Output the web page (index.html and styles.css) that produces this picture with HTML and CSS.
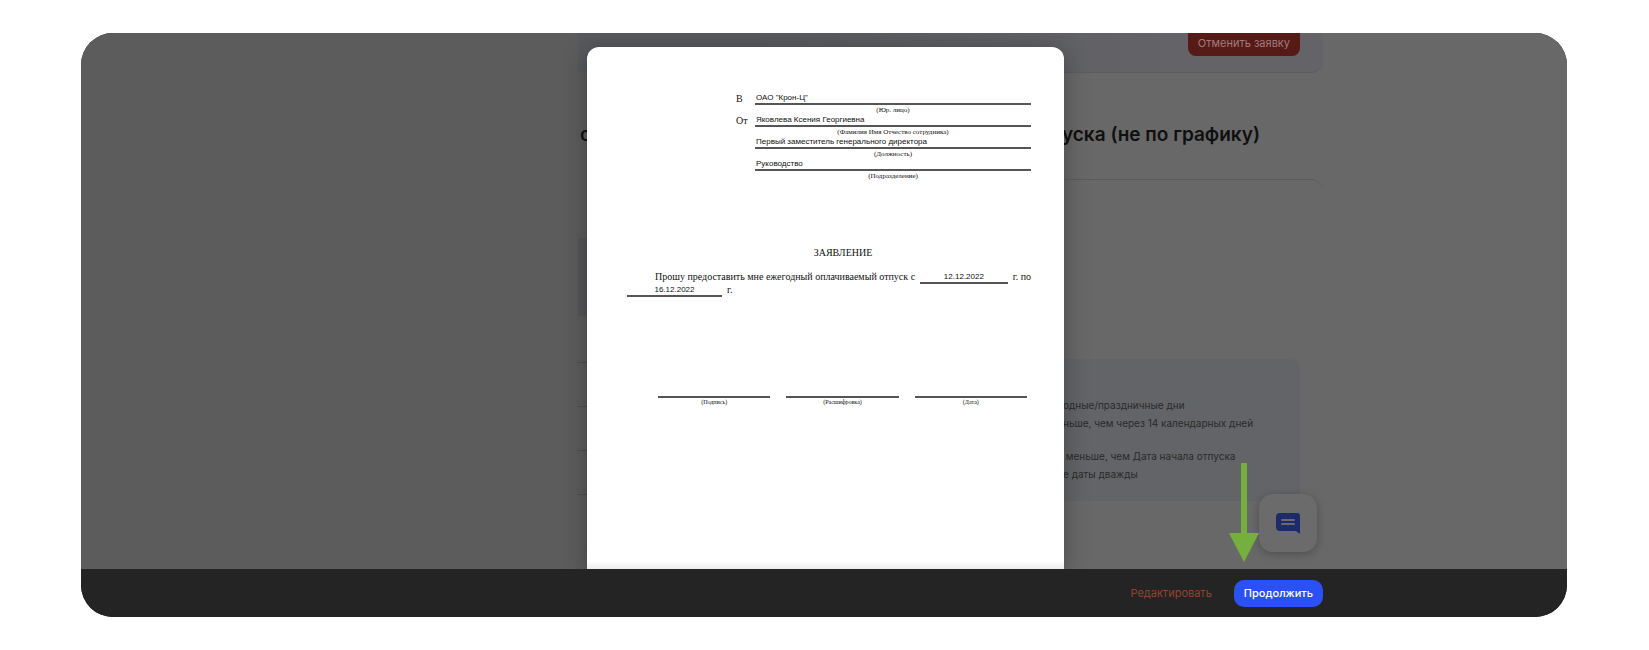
FILE: index.html
```html
<!DOCTYPE html>
<html lang="ru">
<head>
<meta charset="utf-8">
<title>Заявление на отпуск</title>
<link rel="stylesheet" href="styles.css">
</head>
<body>
<main class="frame">
  <div class="stage">
    <section class="page">
      <header class="page-top"><button class="cancel" type="button">Отменить заявку</button></header>
      <h1 class="title"><span>с</span><span>уска (не по графику)</span></h1>
      <div class="card">
        <div class="fields">
          <div class="picked"></div>
          <div class="row"></div>
          <div class="row"></div>
          <div class="row"></div>
          <div class="row"></div>
        </div>
        <div class="info">
          <p>одные/праздничные дни</p>
          <p>ньше, чем через 14 календарных дней</p>
          <p class="next">&nbsp;меньше, чем Дата начала отпуска</p>
          <p>е даты дважды</p>
        </div>
      </div>
      <button class="chat" type="button" aria-label="Чат">
        <svg width="24" height="22" viewBox="0 0 24 22"><path fill="#1f2a6a" d="M4 1h17a3 3 0 0 1 3 3v18l-4-3H4a4 4 0 0 1-4-4V5a4 4 0 0 1 4-4z"/><path d="M6 8h12M6 12h12" stroke="#6b6b6b" stroke-width="2" stroke-linecap="round"/></svg>
      </button>
      <svg class="arrow" width="30" height="99" viewBox="0 0 30 99"><path fill="#75b03f" d="M12 0h6v70h12L15 99 0 70h12z"/></svg>
    </section>

    <div class="overlay">
      <article class="paper" role="dialog" aria-label="Заявление">
        <dl class="addressee">
          <dt>В</dt>
          <dd><p class="value">ОАО "Крон-Ц"</p><p class="caption">(Юр. лицо)</p></dd>
          <dt>От</dt>
          <dd><p class="value">Яковлева Ксения Георгиевна</p><p class="caption">(Фамилия Имя Отчество сотрудника)</p></dd>
          <dd><p class="value">Первый заместитель генерального директора</p><p class="caption">(Должность)</p></dd>
          <dd><p class="value">Руководство</p><p class="caption">(Подразделение)</p></dd>
        </dl>
        <h2 class="doc-title">ЗАЯВЛЕНИЕ</h2>
        <div class="request">
          <div class="line first"><span>Прошу предоставить мне ежегодный оплачиваемый отпуск с</span><span class="date">12.12.2022</span><span>г. по</span></div>
          <div class="line"><span class="date">16.12.2022</span><span>г.</span></div>
        </div>
        <div class="signs">
          <p>(Подпись)</p>
          <p>(Расшифровка)</p>
          <p>(Дата)</p>
        </div>
      </article>
    </div>
  </div>
  <footer class="bar">
    <div class="actions">
      <button class="edit" type="button">Редактировать</button>
      <button class="go" type="button">Продолжить</button>
    </div>
  </footer>
</main>
</body>
</html>
```
FILE: styles.css
```css
* { box-sizing: border-box; }
body, h1, h2, p, dl, dt, dd { margin: 0; }
body {
  min-height: 100vh;
  display: flex;
  padding: 33px 82px 33px 81px;
  background: #fff;
  font-family: Inter, "Noto Sans", sans-serif;
}
button { border: 0; padding: 0; font: inherit; cursor: pointer; }

.frame {
  flex: 1;
  display: flex;
  flex-direction: column;
  border-radius: 32px;
  overflow: hidden;
  background: #232323;
}
.stage, .bar {
  display: grid;
  grid-template-columns: 497fr minmax(0, 745px) 244fr;
}
.stage {
  flex: 1;
  position: relative;
  overflow: hidden;
  background: linear-gradient(90deg, #5c5c5c 45%, #686868 60%);
}

.page {
  grid-column: 2;
  position: relative;
  display: flex;
  flex-direction: column;
}
.page-top {
  display: flex;
  justify-content: flex-end;
  align-items: flex-start;
  height: 40px;
  padding-right: 23px;
  border-bottom: 1px solid #5b5c60;
  border-radius: 0 0 12px 0;
  background: linear-gradient(90deg, #57595c 20%, #646468 80%);
}
.cancel {
  height: 23px;
  padding: 0 10px 3px;
  border-radius: 0 0 8px 8px;
  background: #561a17;
  color: #a17b7a;
  font-size: 11px;
  line-height: 20px;
}
.title {
  display: flex;
  justify-content: space-between;
  padding: 49px 63px 31px 2px;
  color: #101010;
  font-size: 19px;
  line-height: 26px;
  font-weight: 600;
}
.card {
  flex: 1;
  display: grid;
  grid-template-columns: 240px 1fr;
  align-items: start;
  padding-right: 23px;
  border-top: 1px solid #5c5c5e;
  border-radius: 0 12px 0 0;
}
.fields { padding-top: 58px; }
.picked { height: 78px; margin-bottom: 3px; background: #555558; }
.row { height: 44px; border-bottom: 1px solid #4e4e4e; }
.info {
  margin-top: 179px;
  padding: 37px 10px 18px 245px;
  border-radius: 10px;
  background: #636467;
  color: #2a2a2b;
  font-size: 10px;
  line-height: 18px;
  white-space: nowrap;
}
.info .next { margin-top: 15px; }
.chat {
  position: absolute;
  right: 6px;
  bottom: 17px;
  display: grid;
  place-items: center;
  width: 58px;
  height: 58px;
  border-radius: 14px;
  background: #6b6b6b;
  box-shadow: 0 2px 8px rgba(0, 0, 0, .25);
}
.arrow { position: absolute; right: 64px; bottom: 7px; }

.overlay {
  position: absolute;
  inset: 14px 0 0 3px;
  display: flex;
  justify-content: center;
  pointer-events: none;
}
.paper {
  width: 477px;
  padding: 45px 33px 0 40px;
  border-radius: 12px 12px 0 0;
  background: linear-gradient(0deg, #ececec, #fff 8px);
  box-shadow: 0 4px 24px rgba(0, 0, 0, .3);
  color: #111;
  font: 10px/12px "Liberation Serif", serif;
  pointer-events: auto;
}
.addressee {
  display: grid;
  grid-template-columns: 19px 276px;
  justify-content: end;
}
.addressee dt { padding-top: 1px; }
.addressee dd { grid-column: 2; height: 22px; }
.value {
  padding: 0 1px;
  border-bottom: 2px solid #555;
  font: 8px/11px "Liberation Sans", sans-serif;
}
.caption { font-size: 7px; line-height: 10px; text-align: center; }
.doc-title {
  margin-top: 67px;
  font-size: 10px;
  line-height: 12px;
  font-weight: 400;
  text-align: center;
  padding-left: 28px;
}
.request { margin-top: 12px; }
.line { display: flex; gap: 5px; white-space: nowrap; }
.first { padding-left: 28px; }
.date {
  width: 95px;
  border-bottom: 2px solid #555;
  text-align: center;
  font: 8px/11px "Liberation Sans", sans-serif;
}
.first .date { flex: 1; }
.signs {
  display: grid;
  grid-template-columns: repeat(3, 1fr);
  gap: 16px;
  margin-top: 99px;
  padding: 0 4px 0 31px;
}
.signs p {
  border-top: 2px solid #555;
  font-size: 6px;
  line-height: 8px;
  text-align: center;
}

.bar { height: 48px; background: #242424; align-items: center; }
.actions {
  grid-column: 2;
  display: flex;
  justify-content: flex-end;
  gap: 22px;
}
.edit { background: none; color: #97412f; font-size: 11px; }
.go {
  height: 27px;
  padding: 0 10px;
  border-radius: 10px;
  background: #2b50f5;
  color: #fff;
  font-size: 11px;
  font-weight: 500;
}
```
